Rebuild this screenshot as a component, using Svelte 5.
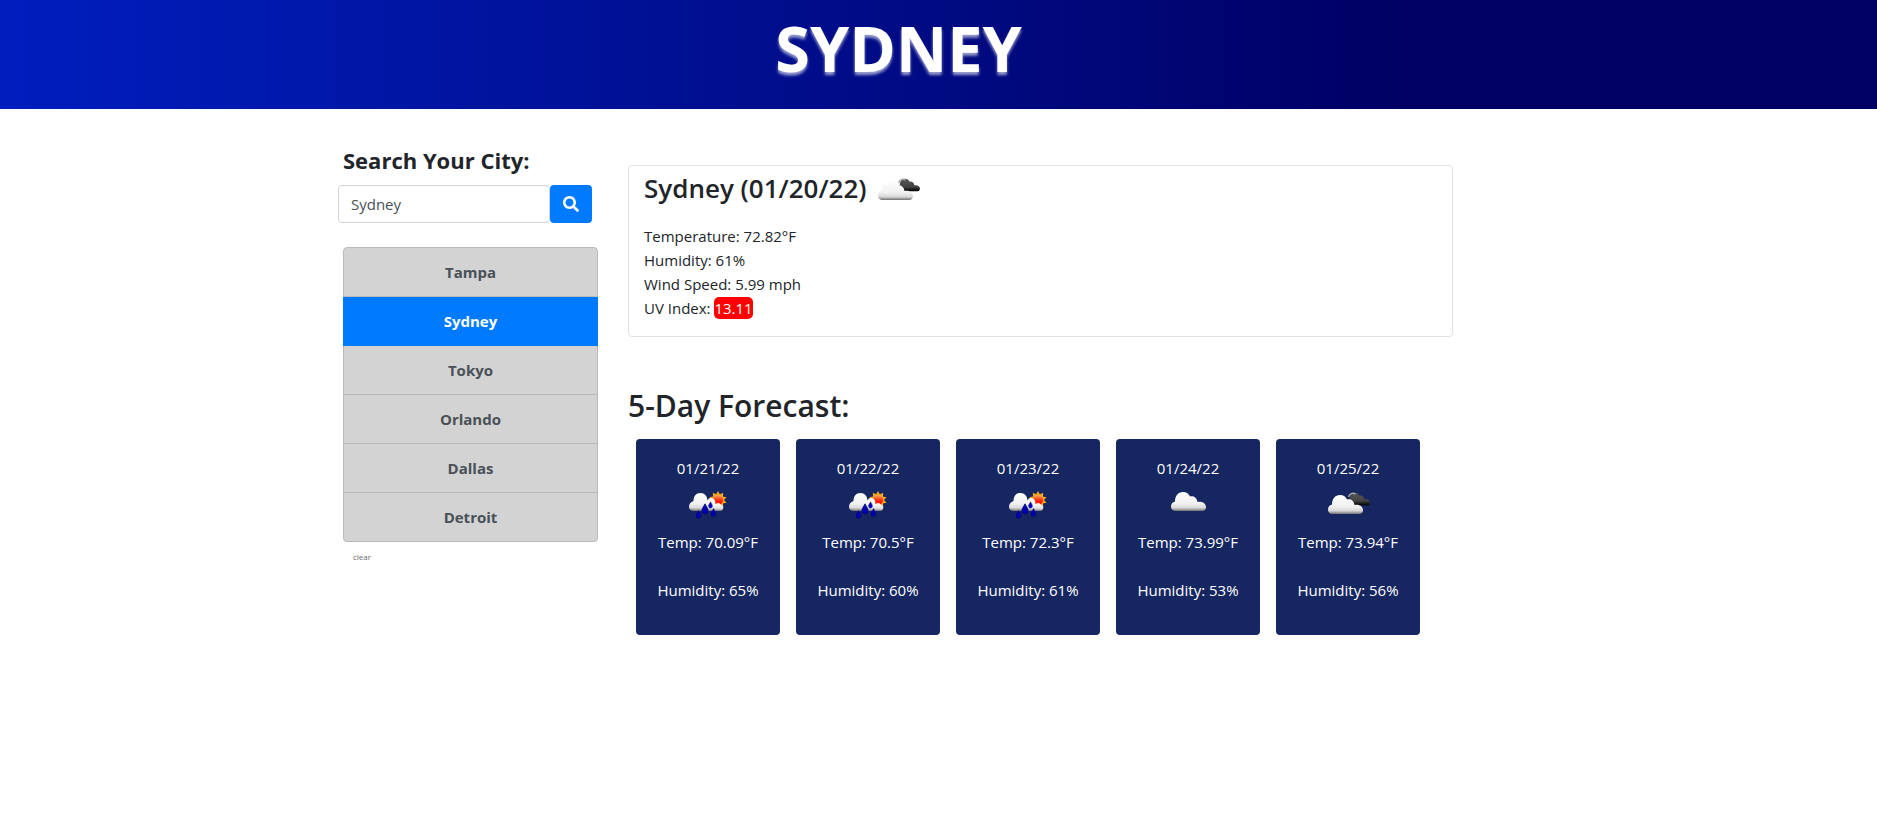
<script>
  const cities = ['Tampa', 'Sydney', 'Tokyo', 'Orlando', 'Dallas', 'Detroit'];
  const forecast = [
    { date: '01/21/22', icon: 'rain', temp: '70.09', humidity: 65 },
    { date: '01/22/22', icon: 'rain', temp: '70.5', humidity: 60 },
    { date: '01/23/22', icon: 'rain', temp: '72.3', humidity: 61 },
    { date: '01/24/22', icon: 'cloud', temp: '73.99', humidity: 53 },
    { date: '01/25/22', icon: 'broken', temp: '73.94', humidity: 56 }
  ];
  const cloud =
    'M13 31C9.500 31 8 29 8 26.500C8 24 9.500 22 12 21.500C12 16 15 12 20 12C23.500 12 26 14 27 16.500C30 15.500 34 17.500 34.500 22C39 21 43 23.500 43 27C43 29.500 41.500 31 39 31Z';
  const drop = 'M0 -4C1 -2 2.400 -.500 2.400 1.300A2.400 2.500 0 0 1 -2.400 1.300C-2.400 -.500 -1 -2 0 -4Z';

  // Ten sun rays: alternate outer and inner points around the centre.
  const rays = Array.from({ length: 20 }, (_, i) => {
    const angle = (i * Math.PI) / 10 - Math.PI / 2;
    const radius = i % 2 ? 6 : 9;
    return `${35 + radius * Math.cos(angle)},${20 + radius * Math.sin(angle)}`;
  }).join(' ');

  let selected = $state('Sydney');
  let query = $state('Sydney');
</script>

{#snippet weather(kind)}
  <svg class="weather" viewBox="0 0 50 50" aria-hidden="true">
    <defs>
      <linearGradient id="white-cloud" x1="0" y1="0" x2="0" y2="1">
        <stop offset="0" stop-color="#fff" />
        <stop offset=".6" stop-color="#f1f1f1" />
        <stop offset=".83" stop-color="#d8d8d8" />
        <stop offset="1" stop-color="#707070" />
      </linearGradient>
      <linearGradient id="dark-cloud" x1="0" y1="0" x2="0" y2="1">
        <stop offset="0" stop-color="#555" />
        <stop offset=".65" stop-color="#444" />
        <stop offset="1" stop-color="#000" />
      </linearGradient>
      <linearGradient id="sun" x1="0" y1="0" x2="0" y2="1">
        <stop offset="0" stop-color="#ffb060" />
        <stop offset=".5" stop-color="#ff3010" />
        <stop offset="1" stop-color="#f00" />
      </linearGradient>
    </defs>
    {#if kind === 'cloud'}
      <path d={cloud} fill="url(#white-cloud)" />
    {:else if kind === 'broken'}
      <path d={cloud} transform="translate(19 5) scale(.65)" fill="url(#dark-cloud)" />
      <path d="M25.500 17C26.500 13.500 29.500 12.500 32.500 14" fill="none" stroke="#aaa" stroke-width="1.500" />
      <path d={cloud} transform="translate(-3 3)" fill="url(#white-cloud)" />
    {:else}
      <polygon points={rays} fill="#f8a818" />
      <circle cx="35" cy="20" r="5" fill="url(#sun)" />
      <path
        d="M25 31C22 24 24 18 28 18C31 18 32.500 20.500 32.500 24C35 22 37 23 37.500 24.500C40.500 24 42 30.500 37 31Z"
        fill="url(#white-cloud)"
      />
      <path
        d="M11 31C7.500 31 6 29 6 26.500C6 24 7.500 22 10.500 21C10.500 16 13 13 17.500 13C21.500 13 24.500 16 24.500 21C28 22 28 31 24 31Z"
        fill="url(#white-cloud)"
      />
      <g fill="#0000b8" stroke="#000060" stroke-width=".5">
        <path d={drop} transform="translate(15.500 34.500)" />
        <path d={drop} transform="translate(22 29) scale(1.300)" />
        <path d={drop} transform="translate(27.500 25) scale(.8)" />
        <path d={drop} transform="translate(30.500 32.500)" />
      </g>
    {/if}
  </svg>
{/snippet}

<header>
  <h1>{selected}</h1>
</header>

<main>
  <aside>
    <h2><label for="city">Search Your City:</label></h2>
    <form onsubmit={(e) => e.preventDefault()}>
      <input id="city" type="text" bind:value={query} />
      <button class="search" type="submit" aria-label="Search">
        <svg viewBox="0 0 512 512" aria-hidden="true">
          <path
            fill="currentColor"
            d="M505 442.700L405.300 343c-4.500-4.500-10.600-7-17-7H372c27.600-35.300 44-79.700 44-128C416 93.100 322.900 0 208 0S0 93.100 0 208s93.100 208 208 208c48.300 0 92.700-16.400 128-44v16.300c0 6.400 2.500 12.500 7 17l99.700 99.700c9.400 9.400 24.600 9.400 33.900 0l28.300-28.300c9.400-9.400 9.400-24.600.1-34zM208 336c-70.700 0-128-57.200-128-128 0-70.700 57.200-128 128-128 70.700 0 128 57.200 128 128 0 70.700-57.200 128-128 128z"
          />
        </svg>
      </button>
    </form>
    <ul>
      {#each cities as city}
        <li>
          <button class:active={city === selected} type="button" onclick={() => (selected = city)}>{city}</button>
        </li>
      {/each}
    </ul>
    <button class="clear" type="button">clear</button>
  </aside>

  <div class="content">
    <section class="current">
      <h3>Sydney (01/20/22) {@render weather('broken')}</h3>
      <p>Temperature: 72.82°F</p>
      <p>Humidity: 61%</p>
      <p>Wind Speed: 5.99 mph</p>
      <p>UV Index: <span class="uv">13.11</span></p>
    </section>

    <h2 class="forecast-title">5-Day Forecast:</h2>
    <div class="days">
      {#each forecast as day}
        <article>
          <p>{day.date}</p>
          {@render weather(day.icon)}
          <p>Temp: {day.temp}°F</p>
          <p class="humidity">Humidity: {day.humidity}%</p>
        </article>
      {/each}
    </div>
  </div>
</main>

<style>
  :global(body) {
    margin: 0;
    background: #fff;
    color: #212529;
    font: 15px/24px 'Open Sans', 'Noto Sans', sans-serif;
  }
  :global(*) {
    box-sizing: border-box;
  }
  h1,
  h2,
  h3,
  p,
  ul {
    margin: 0;
    padding: 0;
  }
  button,
  input {
    font: inherit;
  }
  button {
    cursor: pointer;
  }
  header {
    padding: 10px 80px 23px 0;
    background: linear-gradient(to right, #001ebe, #000064 75%);
    text-align: center;
  }
  h1 {
    color: #fff;
    font-size: 63px;
    font-weight: 700;
    line-height: 76px;
    text-transform: uppercase;
    text-shadow: 0 3px 3px rgba(255, 255, 255, 0.6);
  }
  main {
    display: grid;
    grid-template-columns: minmax(0, 1fr) minmax(0, 3fr);
    max-width: 1221px;
    margin: 0 auto;
    padding: 36px 81px 32px 0;
  }
  aside,
  .content {
    padding: 0 15px;
  }
  aside h2 {
    font-size: 22px;
    line-height: 30px;
    font-weight: 700;
  }
  form {
    display: flex;
    margin: 10px 6px 24px -5px;
  }
  input {
    flex: 1;
    min-width: 0;
    height: 38px;
    padding: 6px 12px;
    border: 1px solid #ced4da;
    border-radius: 4px;
    background: #fff;
    color: #495057;
  }
  .search {
    width: 42px;
    height: 38px;
    padding: 0;
    border: 0;
    border-radius: 4px;
    background: #007bff;
    color: #fff;
  }
  .search svg {
    display: block;
    width: 16px;
    height: 16px;
    margin: 0 auto;
  }
  ul {
    overflow: hidden;
    border-radius: 4px;
    list-style: none;
  }
  li button {
    display: block;
    width: 100%;
    padding: 12px 20px;
    border: 1px solid #b9b9b9;
    border-top-width: 0;
    background: #d3d3d3;
    color: #495057;
    font-weight: 700;
  }
  li:first-child button {
    border-top-width: 1px;
    border-radius: 4px 4px 0 0;
  }
  li:last-child button {
    border-radius: 0 0 4px 4px;
  }
  li .active {
    border-color: #007bff;
    background: #007bff;
    color: #fff;
  }
  .clear {
    display: block;
    margin-left: 10px;
    padding: 8px 0;
    border: 0;
    background: none;
    color: #6c6c6c;
    font-size: 8px;
    line-height: 14px;
  }
  .current {
    margin-top: 20px;
    padding: 0 15px 16px;
    border: 1px solid #dfe1e4;
    border-radius: 4px;
  }
  h3 {
    display: flex;
    align-items: center;
    gap: 6px;
    height: 46px;
    margin-bottom: 12px;
    padding-bottom: 2px;
    font-size: 26px;
    font-weight: 600;
    line-height: 32px;
  }
  h3 :global(.weather) {
    margin-top: 6px;
  }
  .weather {
    display: block;
    flex: none;
    width: 50px;
    height: 50px;
  }
  .uv {
    padding: 1px 0;
    border-radius: 5px;
    background: #f00;
    color: #fff;
  }
  .forecast-title {
    margin-top: 49px;
    font-size: 30px;
    font-weight: 600;
    line-height: 40px;
  }
  .days {
    display: flex;
    gap: 16px;
    margin: 13px 33px 0 8px;
  }
  article {
    flex: 1;
    padding: 17px 0 33px;
    border-radius: 4px;
    background: #162660;
    color: #fff;
    text-align: center;
  }
  article .weather {
    margin: 0 auto;
  }
  .humidity {
    margin-top: 24px;
  }
</style>
